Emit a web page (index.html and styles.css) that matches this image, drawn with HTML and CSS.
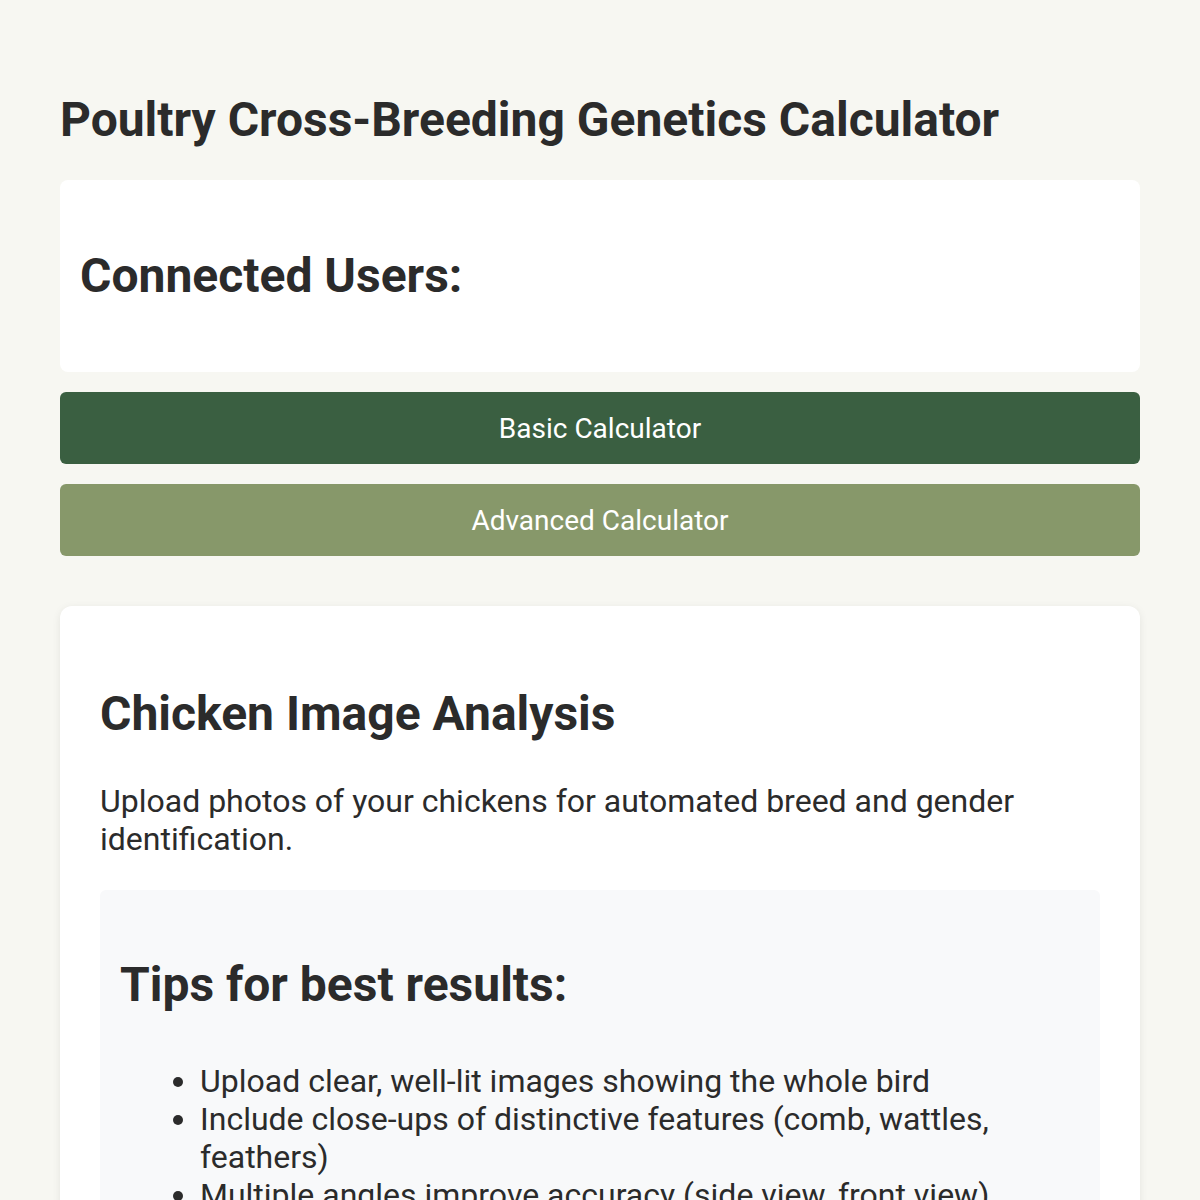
FILE: index.html
```html
<!DOCTYPE html>
<html lang="en">
<head>
<meta charset="utf-8">
<title>Poultry Cross-Breeding Genetics Calculator</title>
<link rel="stylesheet" href="styles.css">
</head>
<body>
<div class="page">
  <h1 class="title">Poultry Cross-Breeding Genetics Calculator</h1>

  <section class="users-card">
    <h2 class="users-title">Connected Users:</h2>
  </section>

  <div class="mode-buttons">
    <button class="mode-btn mode-btn-basic" type="button">Basic Calculator</button>
    <button class="mode-btn mode-btn-advanced" type="button">Advanced Calculator</button>
  </div>

  <section class="analysis-card">
    <h2 class="analysis-title">Chicken Image Analysis</h2>
    <p class="analysis-text">Upload photos of your chickens for automated breed and gender identification.</p>
    <div class="tips">
      <h3 class="tips-title">Tips for best results:</h3>
      <ul class="tips-list">
        <li>Upload clear, well-lit images showing the whole bird</li>
        <li>Include close-ups of distinctive features (comb, wattles, feathers)</li>
        <li>Multiple angles improve accuracy (side view, front view)</li>
        <li>Natural lighting works best for feather color identification</li>
      </ul>
    </div>
  </section>
</div>
</body>
</html>
```
FILE: styles.css
```css
* { box-sizing: border-box; }

html, body {
  margin: 0;
  padding: 0;
  background: #f7f7f2;
}

body {
  font-family: Roboto, "Liberation Sans", Arial, sans-serif;
  color: #2b2b2b;
  font-size: 32px;
  line-height: 38px;
}

.page {
  padding: 60px;
}

.title {
  font-size: 48px;
  font-weight: 700;
  line-height: 56px;
  margin: 32px 0 32px;
}

.users-card {
  background: #ffffff;
  border-radius: 8px;
  padding: 24px 20px;
}

.users-title {
  font-size: 48px;
  line-height: 56px;
  font-weight: 700;
  margin: 44px 0;
}

.mode-buttons {
  display: flex;
  flex-direction: column;
  gap: 20px;
  margin-top: 20px;
}

.mode-btn {
  display: block;
  width: 100%;
  height: 72px;
  border: none;
  border-radius: 6px;
  color: #ffffff;
  font-family: inherit;
  font-size: 28px;
  cursor: pointer;
}

.mode-btn-basic { background: #3a5f41; }
.mode-btn-advanced { background: #87986a; }

.analysis-card {
  margin-top: 50px;
  background: #ffffff;
  border-radius: 12px;
  padding: 40px;
  box-shadow: 0 2px 8px rgba(0, 0, 0, 0.08);
}

.analysis-title {
  font-size: 48px;
  line-height: 56px;
  font-weight: 700;
  margin: 40px 0;
}

.analysis-text {
  margin: 0 0 32px;
}

.tips {
  background: #f8f9fa;
  border-radius: 6px;
  padding: 20px;
}

.tips-title {
  font-size: 48px;
  line-height: 70px;
  font-weight: 700;
  margin: 40px 0 42px;
}

.tips-list {
  margin: 0;
  padding-left: 80px;
}
```
